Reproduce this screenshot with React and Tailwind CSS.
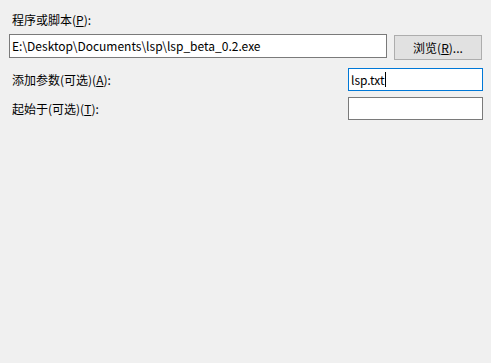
export default function App() {
    return (
        <div
            className="w-[491px] h-[363px] bg-[#f0f0f0] text-[12px] text-black overflow-hidden"
            style={{ fontFamily: '"Noto Sans CJK SC", "Noto Sans", sans-serif' }}
        >
            {/* Program */}
            <div className="pt-[12px] pl-[12px] leading-[16px]">
                程序或脚本(<span className="underline">P</span>):
            </div>
            <div className="flex items-start mt-[6px] pl-[9px]">
                <div className="w-[378px] h-[24px] bg-white border border-[#7a7a7a] flex items-center px-[2px] leading-[16px] whitespace-nowrap overflow-hidden">
                    E:\Desktop\Documents\lsp\lsp_beta_0.2.exe
                </div>
                <button className="ml-[7px] mt-[1px] w-[88px] h-[25px] bg-[#e1e1e1] border border-[#adadad] flex items-center justify-center leading-[16px]">
                    浏览(<span className="underline">R</span>)...
                </button>
            </div>

            {/* Arguments */}
            <div className="flex items-center justify-between mt-[8px] pl-[12px] pr-[8px]">
                <div className="leading-[16px]">
                    添加参数(可选)(<span className="underline">A</span>):
                </div>
                <div className="w-[135px] h-[23px] bg-white border border-[#0078d7] flex items-center px-[2px] leading-[16px]">
                    lsp.txt
                    <span className="inline-block w-[1px] h-[15px] bg-black"></span>
                </div>
            </div>

            {/* Start in */}
            <div className="flex items-center justify-between mt-[6px] pl-[12px] pr-[8px]">
                <div className="leading-[16px]">
                    起始于(可选)(<span className="underline">T</span>):
                </div>
                <div className="w-[135px] h-[23px] bg-white border border-[#7a7a7a]"></div>
            </div>
        </div>
    );
}
